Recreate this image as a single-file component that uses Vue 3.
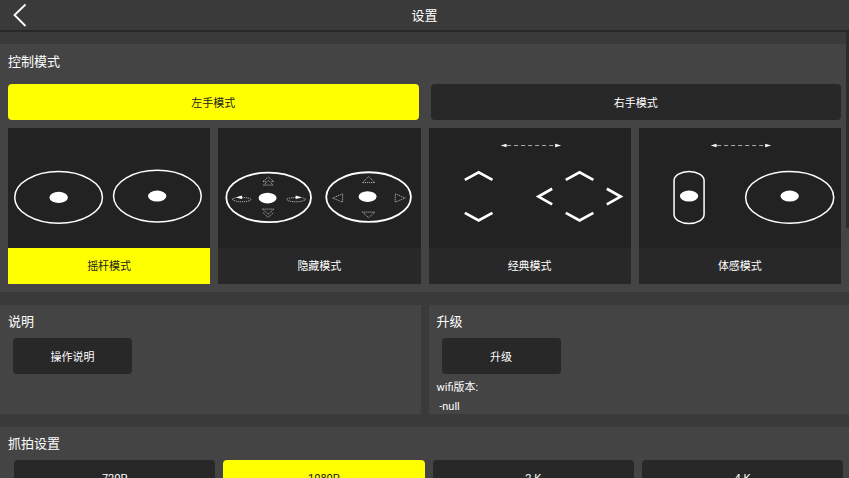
<template>
  <div class="settings">
    <header class="header">
      <button class="back" aria-label="返回">
        <svg width="14" height="24" viewBox="0 0 14 24">
          <path d="M12.5 1.5 L1.5 12 L12.5 23" />
        </svg>
      </button>
      <h1>设置</h1>
    </header>

    <div class="body">
      <main class="content">
        <section class="panel control">
          <h2>控制模式</h2>
          <div class="hands">
            <button
              v-for="item in hands"
              :key="item"
              class="btn"
              :class="{ active: item === hand }"
              @click="hand = item"
            >
              {{ item }}
            </button>
          </div>

          <div class="modes">
            <button
              v-for="item in modes"
              :key="item.id"
              class="mode"
              :class="{ active: item.id === mode }"
              @click="mode = item.id"
            >
              <svg class="drawing" viewBox="0 0 202 120">
                <g v-if="item.id === 'stick'">
                  <ellipse class="ring" cx="50.5" cy="69.3" rx="43.8" ry="25.8" />
                  <ellipse class="ring" cx="149.2" cy="68" rx="43.8" ry="25.8" />
                  <ellipse class="dot" cx="50.6" cy="69.3" rx="9.2" ry="5.5" />
                  <ellipse class="dot" cx="149" cy="68" rx="9.2" ry="5.5" />
                </g>

                <g v-else-if="item.id === 'hidden'">
                  <ellipse class="ring bold" cx="50.6" cy="69.3" rx="42.3" ry="24.8" />
                  <ellipse class="ring bold" cx="150.4" cy="69" rx="42.3" ry="24.8" />
                  <ellipse class="dot" cx="49.5" cy="70" rx="9" ry="5.3" />
                  <ellipse class="dot" cx="149.4" cy="68.5" rx="9" ry="5.3" />
                  <path
                    class="dotted"
                    d="M45 53.5 L50.3 49 L55.6 53.5 H53 M45 53.5 H48 M45.5 57 L50.3 52.5 L55.2 57 Z"
                  />
                  <path
                    class="dotted"
                    d="M45 84.5 L50 89.3 L55.5 84.5 M44.5 81 H56 L50 86 Z"
                  />
                  <path
                    class="dotted"
                    d="M24 69.5 C30 69.5 33 70.5 33 71.5 C31 74.5 16 74.5 14 71 L18 69.5"
                  />
                  <path class="dot" d="M17.5 69.3 L24 67.3 V71 Z" />
                  <path
                    class="dotted"
                    d="M78 69.5 C72 69.5 68.5 70.5 68.5 71.5 C71 74.5 86 74.5 87.5 71 L84 69.5"
                  />
                  <path class="dot" d="M84 69.3 L77.5 67.3 V71 Z" />
                  <path class="dotted" d="M144.3 54.5 L150.5 48.5 L156.7 54.5 Z" />
                  <path class="dotted" d="M144.3 84 L150.5 89.5 L156.7 84 Z" />
                  <path class="dotted" d="M124.5 65.7 L114.5 70 L124.5 74 Z" />
                  <path class="dotted" d="M177 65.7 L187 70 L177 74 Z" />
                </g>

                <g v-else-if="item.id === 'classic'">
                  <path class="dash" d="M78 17.5 H127" />
                  <path
                    class="dot"
                    d="M71.5 17.5 L77.5 15.7 V19.3 Z M132 17.5 L126 15.7 V19.3 Z"
                  />
                  <path
                    class="chevron"
                    d="M35.8 51.8 L49.6 44.3 L63.4 51.8 M35.8 84.8 L49.6 92.3 L63.4 84.8"
                  />
                  <path
                    class="chevron"
                    d="M136.6 51.8 L150.4 44.3 L164.2 51.8 M136.6 84.8 L150.4 92.3 L164.2 84.8"
                  />
                  <path
                    class="chevron"
                    d="M123 60.7 L109.3 68.5 L123 76.3 M177.6 60.7 L191.4 68.5 L177.6 76.3"
                  />
                </g>

                <g v-else>
                  <path class="dash" d="M78 17.5 H127" />
                  <path
                    class="dot"
                    d="M71.5 17.5 L77.5 15.7 V19.3 Z M132 17.5 L126 15.7 V19.3 Z"
                  />
                  <rect class="ring" x="35" y="43.5" width="30" height="51.8" rx="15" ry="9" />
                  <ellipse class="ring" cx="150.5" cy="69.3" rx="44" ry="25.8" />
                  <ellipse class="dot" cx="50" cy="68" rx="9.2" ry="5.5" />
                  <ellipse class="dot" cx="150.5" cy="68" rx="9.2" ry="5.5" />
                </g>
              </svg>
              <span class="mode-name">{{ item.name }}</span>
            </button>
          </div>
        </section>

        <div class="columns">
          <section class="panel">
            <h2>说明</h2>
            <button class="btn small">操作说明</button>
          </section>
          <section class="panel">
            <h2>升级</h2>
            <button class="btn small">升级</button>
            <div class="version">
              <p>wifi版本:</p>
              <p>&nbsp;-null</p>
            </div>
          </section>
        </div>

        <section class="panel">
          <h2>抓拍设置</h2>
          <div class="sizes">
            <button
              v-for="item in sizes"
              :key="item"
              class="btn"
              :class="{ active: item === size }"
              @click="size = item"
            >
              {{ item }}
            </button>
          </div>
        </section>
      </main>
      <div class="scroll-thumb"></div>
    </div>
  </div>
</template>

<script setup>
import { ref } from "vue";

const hands = ["左手模式", "右手模式"];
const hand = ref("左手模式");

const modes = [
  { id: "stick", name: "摇杆模式" },
  { id: "hidden", name: "隐藏模式" },
  { id: "classic", name: "经典模式" },
  { id: "motion", name: "体感模式" },
];
const mode = ref("stick");

const sizes = ["720P", "1080P", "2 K", "4 K"];
const size = ref("1080P");
</script>

<style>
body {
  margin: 0;
  background-color: #3a3a3a;
}
</style>

<style scoped>
* {
  margin: 0;
  padding: 0;
  box-sizing: border-box;
}

.settings {
  height: 100vh;
  display: flex;
  flex-direction: column;
  overflow: hidden;
  background-color: #3a3a3a;
  color: #fff;
  font-family: Roboto, "Noto Sans CJK SC", sans-serif;
  font-size: 11px;
}

button {
  border: none;
  color: inherit;
  font: inherit;
  cursor: pointer;
}

.header {
  display: grid;
  grid-template-columns: 40px 1fr 40px;
  align-items: center;
  height: 32px;
  flex-shrink: 0;
  border-bottom: 2px solid #282828;
}

.header h1 {
  padding-top: 2px;
  font-size: 13px;
  font-weight: 400;
  line-height: 28px;
  text-align: center;
}

.back {
  display: flex;
  justify-content: center;
  background: none;
}

.back path {
  fill: none;
  stroke: #fff;
  stroke-width: 1.8;
}

.body {
  position: relative;
  flex: 1;
  min-height: 0;
}

.content {
  display: flex;
  flex-direction: column;
  gap: 13px;
  height: 100%;
  padding-top: 12px;
  overflow-y: auto;
  scrollbar-width: none;
}

.scroll-thumb {
  position: absolute;
  top: 0;
  right: 0;
  width: 3px;
  height: 44%;
  background-color: #2c2c2c;
}

.panel {
  padding: 0 8px;
  background-color: #444;
}

.panel h2 {
  font-size: 13px;
  font-weight: 400;
  line-height: 33px;
}

.control {
  padding-bottom: 8px;
}

.control h2 {
  line-height: 35px;
  margin-bottom: 5px;
}

.btn {
  height: 36px;
  border-radius: 4px;
  background-color: #282828;
}

.btn.active,
.active .mode-name {
  background-color: #ff0;
  color: #222;
}

.hands {
  display: grid;
  grid-template-columns: 1fr 1fr;
  gap: 12px;
  margin-bottom: 8px;
}

.modes {
  display: grid;
  grid-template-columns: repeat(4, 1fr);
  gap: 8px;
}

.mode {
  display: flex;
  flex-direction: column;
  background-color: #222;
}

.drawing {
  display: block;
  width: 100%;
}

.mode-name {
  width: 100%;
  padding-top: 2px;
  line-height: 34px;
  background-color: #282828;
}

.ring,
.dotted,
.dash,
.chevron {
  fill: none;
  stroke: #fff;
}

.ring {
  stroke-width: 1.5;
}

.ring.bold {
  stroke-width: 1.8;
}

.dot {
  fill: #fff;
}

.dotted {
  stroke: #ccc;
  stroke-width: 0.8;
  stroke-dasharray: 1.2 0.8;
}

.dash {
  stroke: #bbb;
  stroke-width: 0.9;
  stroke-dasharray: 4 3;
}

.chevron {
  stroke-width: 2.7;
}

.columns {
  display: grid;
  grid-template-columns: 1fr 1fr;
  gap: 8px;
}

.small {
  display: block;
  width: 119px;
  margin-left: 5px;
}

.version {
  display: flex;
  flex-direction: column;
  gap: 4px;
  margin-top: 6px;
  line-height: 15px;
}

.sizes {
  display: grid;
  grid-template-columns: repeat(4, 1fr);
  gap: 8px;
  margin: 0 -2px 8px 6px;
}
</style>
